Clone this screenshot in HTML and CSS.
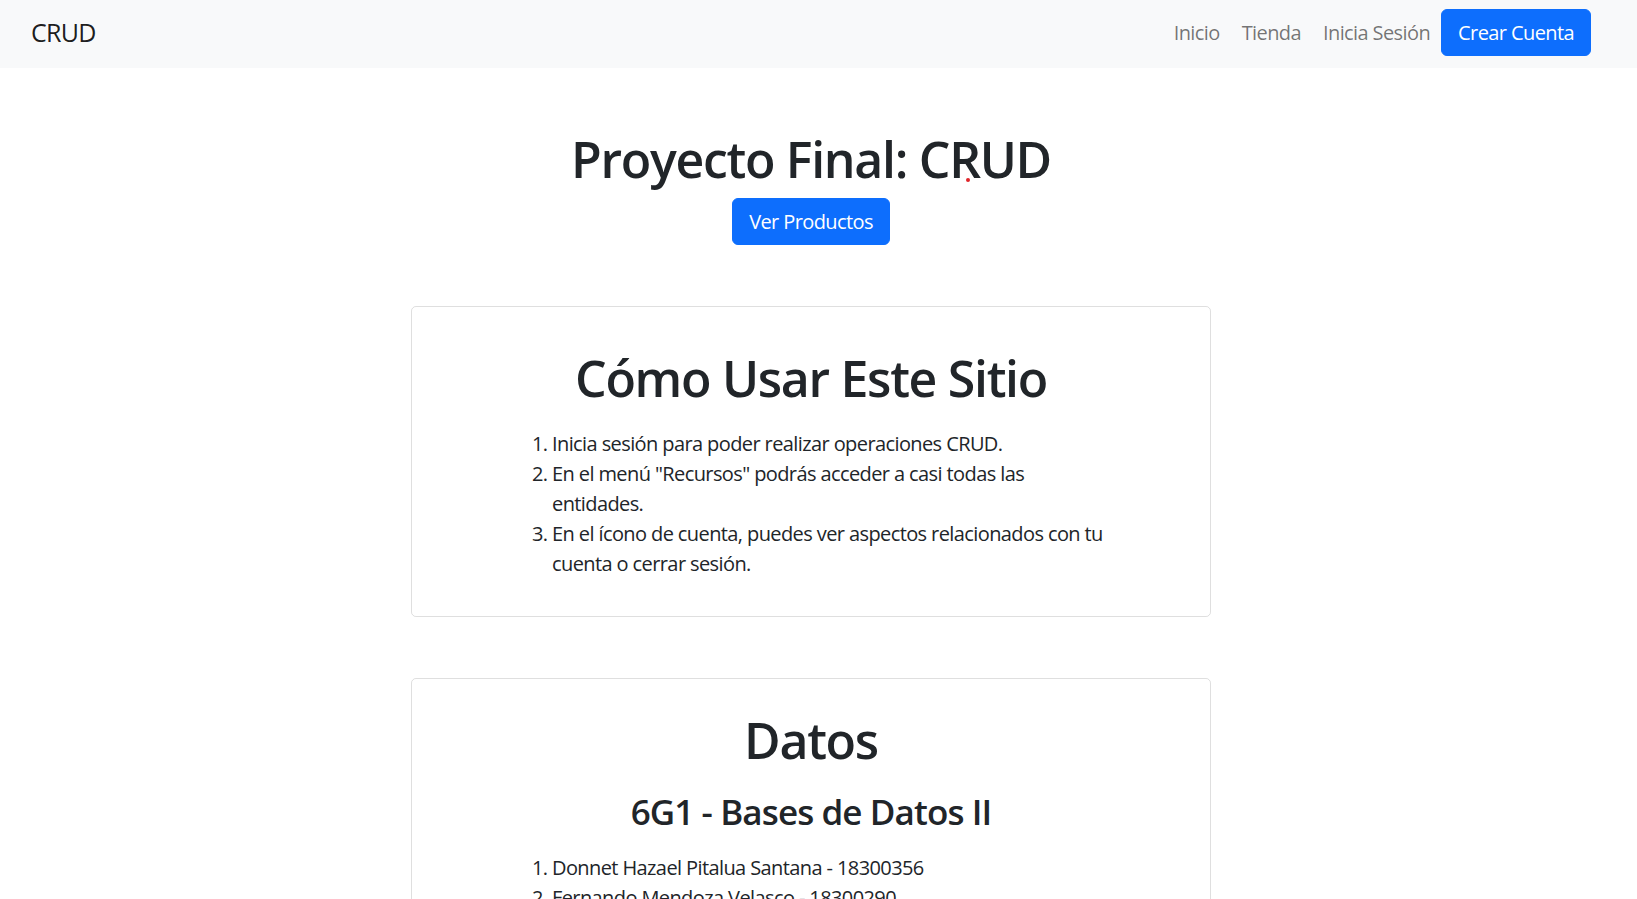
FILE: index.html
```html
<!DOCTYPE html>
<html lang="es">
<head>
<meta charset="utf-8">
<title>CRUD</title>
<link rel="stylesheet" href="styles.css">
</head>
<body>
<nav class="navbar">
  <a class="brand" href="#">CRUD</a>
  <ul class="nav-list">
    <li><a class="nav-link" href="#">Inicio</a></li>
    <li><a class="nav-link" href="#">Tienda</a></li>
    <li><a class="nav-link" href="#">Inicia Sesión</a></li>
    <li><a class="btn" href="#">Crear Cuenta</a></li>
  </ul>
</nav>
<main class="page">
  <section class="hero">
    <h1 class="hero-title">Proyecto Final: C<span class="mark">R</span>UD</h1>
    <a class="btn" href="#">Ver Productos</a>
  </section>
  <section class="card">
    <h1 class="card-title">Cómo Usar Este Sitio</h1>
    <ol class="steps">
      <li>Inicia sesión para poder realizar operaciones CRUD.</li>
      <li>En el menú "Recursos" podrás acceder a casi todas las entidades.</li>
      <li>En el ícono de cuenta, puedes ver aspectos relacionados con tu cuenta o cerrar sesión.</li>
    </ol>
  </section>
  <section class="card">
    <h1 class="card-title card-title-tight">Datos</h1>
    <h3 class="card-subtitle">6G1 - Bases de Datos II</h3>
    <ol class="steps">
      <li>Donnet Hazael Pitalua Santana - 18300356</li>
      <li>Fernando Mendoza Velasco - 18300290</li>
    </ol>
  </section>
</main>
</body>
</html>
```
FILE: styles.css
```css
* { box-sizing: border-box; }

body {
  margin: 0;
  font-family: "Open Sans", "Noto Sans", sans-serif;
  font-size: 20px;
  line-height: 1.5;
  color: #212529;
  background: #fff;
  letter-spacing: -0.6px;
}

.navbar {
  display: flex;
  align-items: center;
  justify-content: space-between;
  height: 68px;
  padding: 9px 46px 12px 31px;
  background: #f8f9fa;
}

.brand {
  font-size: 25px;
  line-height: 37.5px;
  letter-spacing: -0.75px;
  color: rgba(0, 0, 0, 0.9);
  text-decoration: none;
}

.nav-list {
  display: flex;
  align-items: center;
  list-style: none;
  margin: 0;
  padding: 0;
}

.nav-link {
  display: block;
  padding: 0 11px;
  line-height: 30px;
  color: rgba(0, 0, 0, 0.55);
  text-decoration: none;
}

.btn {
  display: inline-block;
  padding: 7.5px 16px;
  border: 1px solid #0d6efd;
  border-radius: 6px;
  background: #0d6efd;
  color: #fff;
  font-size: 20px;
  line-height: 30px;
  text-decoration: none;
}

.page {
  display: flex;
  flex-direction: column;
  align-items: center;
  gap: 61px;
  padding: 61px 15px 60px 0;
}

.hero { text-align: center; }

.hero-title {
  margin: 0 0 9px;
  font-size: 50px;
  line-height: 60px;
  font-weight: 600;
  letter-spacing: -1.3px;
}

.mark { position: relative; }
.mark::after {
  content: "";
  position: absolute;
  left: 55%;
  bottom: 11px;
  width: 4px;
  height: 4px;
  border-radius: 50%;
  background: #e0242a;
}

.card {
  width: 800px;
  padding: 20px;
  border: 1px solid rgba(0, 0, 0, 0.125);
  border-radius: 5px;
}

.card-title {
  margin: 21px 0 21px;
  font-size: 50px;
  line-height: 60px;
  font-weight: 600;
  letter-spacing: -1.3px;
  text-align: center;
}

.card-title-tight { margin: 11px 0 21px; }

.card-subtitle {
  margin: 0 0 20px;
  font-size: 35px;
  line-height: 42px;
  font-weight: 600;
  letter-spacing: -0.9px;
  text-align: center;
}

.steps {
  margin: 0 72px 17px 80px;
  padding-left: 40px;
}
```
